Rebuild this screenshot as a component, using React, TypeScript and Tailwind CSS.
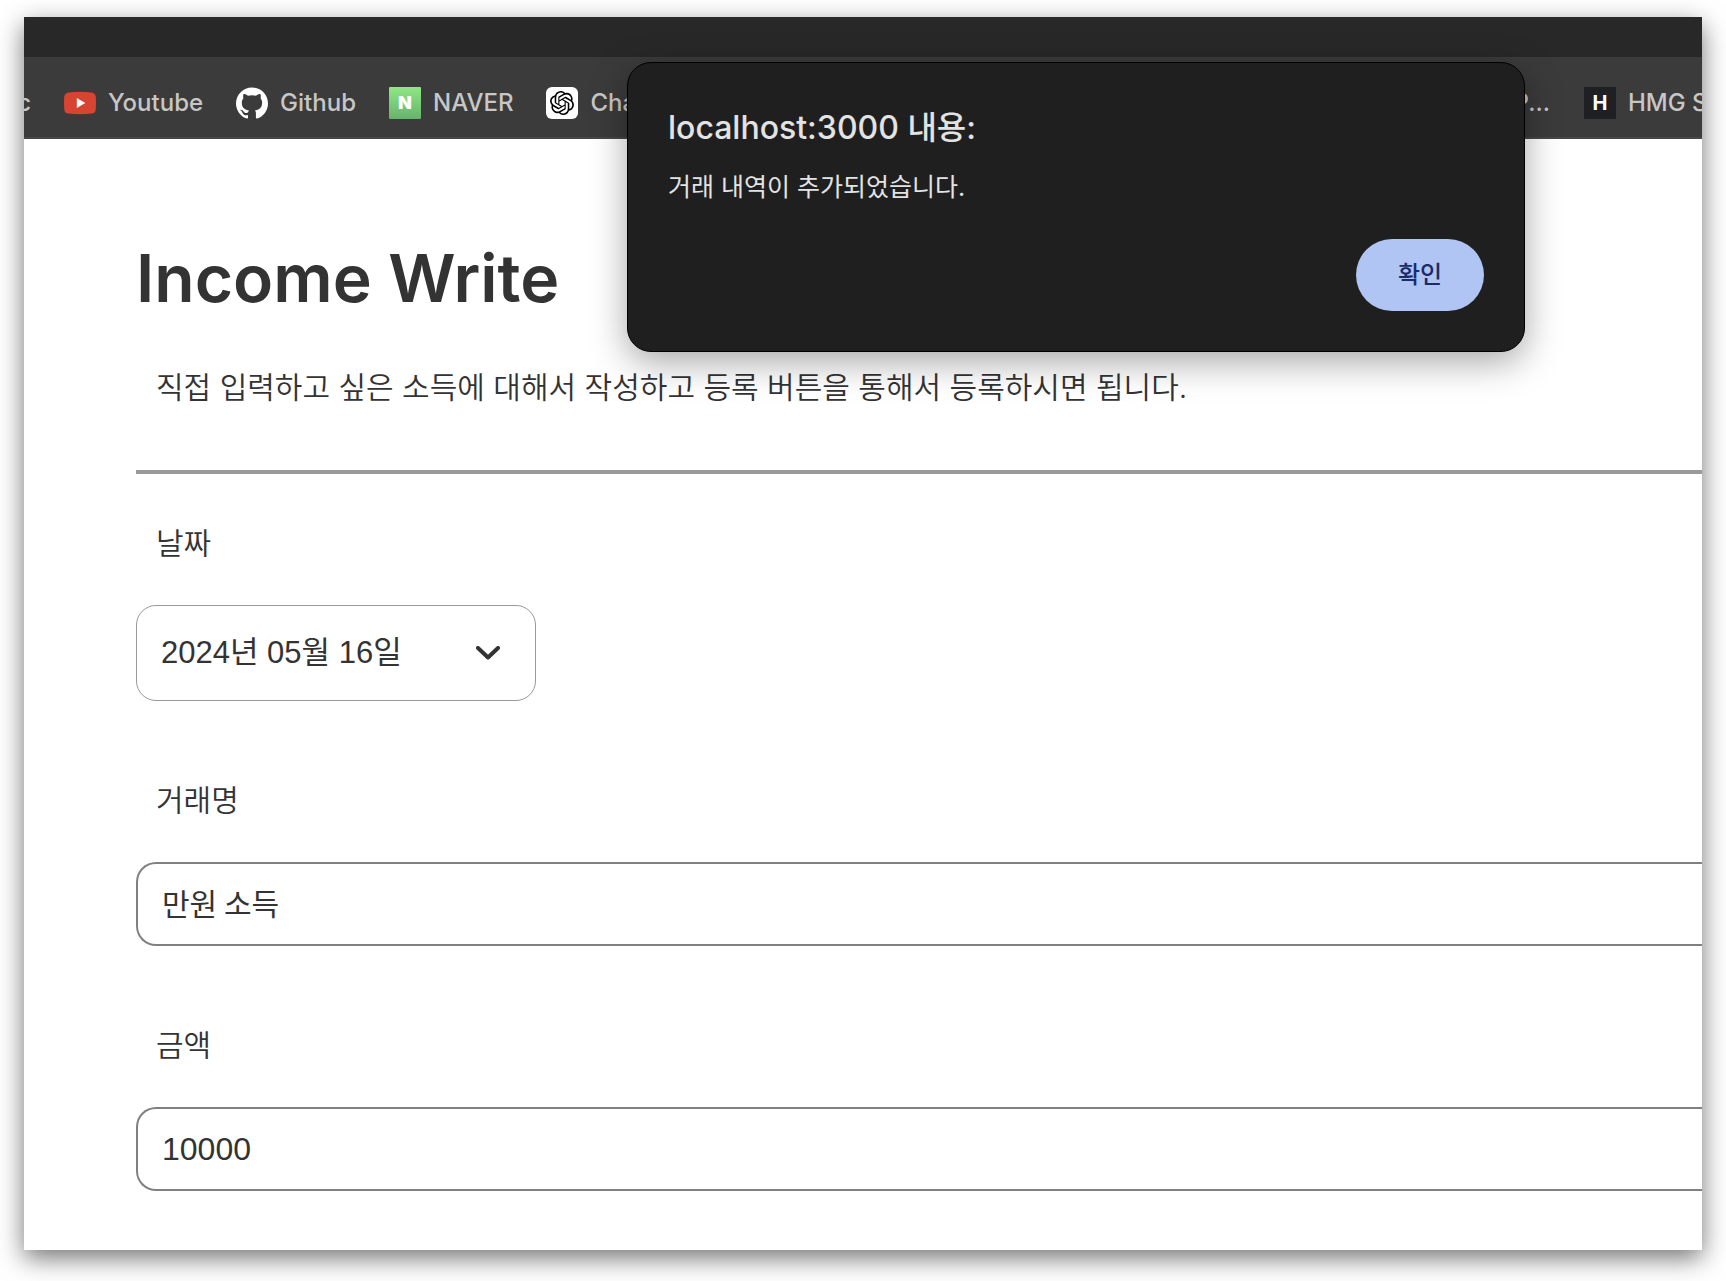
import type { ReactNode } from "react";
import { SiGithub, SiOpenai } from "react-icons/si";

function YoutubeIcon() {
  return (
    <svg viewBox="0 0 32 32" className="size-8" aria-hidden="true">
      <path
        d="M4.5 5.4C8 5 12 4.8 16 4.8s8 .2 11.500.6c2.400.3 3.900 1.800 4.200 4.200.4 4 .4 8.800 0 12.800-.3 2.400-1.800 3.900-4.200 4.200-3.500.4-7.500.6-11.500.6s-8-.2-11.500-.6C2.100 26.300.6 24.800.3 22.400c-.4-4-.4-8.800 0-12.800C.6 7.200 2.100 5.700 4.500 5.400Z"
        fill="#d84432"
      />
      <path d="M12.800 11v10l8.500-5Z" fill="#fff" />
    </svg>
  );
}

function Bookmark({ icon, children }: { icon: ReactNode; children: ReactNode }) {
  return (
    <a href="#" className="flex shrink-0 items-center gap-3">
      <span className="flex size-8 shrink-0 items-center justify-center">{icon}</span>
      {children}
    </a>
  );
}

function BookmarkBar() {
  return (
    <nav className="flex justify-between overflow-hidden whitespace-nowrap border-b-2 border-[#474747] bg-[#3b3b3b] pt-[30px] pb-[18px] text-2xl leading-8 font-medium text-[#c7c7c7]">
      <div className="flex gap-[33px]">
        <a href="#" className="flex w-[7px] justify-end overflow-hidden">
          c
        </a>
        <Bookmark icon={<YoutubeIcon />}>Youtube</Bookmark>
        <Bookmark icon={<SiGithub className="size-8 text-white" />}>Github</Bookmark>
        <Bookmark
          icon={
            <span className="flex size-8 items-center justify-center rounded-[1px] bg-linear-to-b from-[#8fe883] to-[#68b36c] text-lg leading-none font-black text-white">
              N
            </span>
          }
        >
          NAVER
        </Bookmark>
        <Bookmark
          icon={
            <span className="flex size-8 items-center justify-center rounded-md bg-white">
              <SiOpenai className="size-6 text-black" />
            </span>
          }
        >
          ChatGPT
        </Bookmark>
      </div>
      <div className="flex gap-[34px]">
        <a href="#">P...</a>
        <div className="w-[118px] overflow-hidden">
          <Bookmark
            icon={
              <span className="flex size-8 items-center justify-center bg-[#1e2024] text-xl leading-none font-bold text-white">
                H
              </span>
            }
          >
            HMG S
          </Bookmark>
        </div>
      </div>
    </nav>
  );
}

function AlertDialog() {
  return (
    <div
      role="alertdialog"
      aria-labelledby="alert-title"
      aria-describedby="alert-message"
      className="absolute top-[45px] right-[177px] left-[603px] flex flex-col rounded-3xl border border-black bg-[#1f1f1f] p-10 text-[#e3e3e3] shadow-[0_10px_36px_rgba(0,0,0,0.35)]"
    >
      <h2 id="alert-title" className="text-[32px] leading-[50px] font-medium">
        localhost:3000 내용:
      </h2>
      <p id="alert-message" className="mt-4 text-[25px] leading-9">
        거래 내역이 추가되었습니다.
      </p>
      <button
        type="button"
        className="mt-[34px] h-[72px] w-32 self-end rounded-full bg-[#b1c5f4] text-2xl font-medium text-[#1a2b69]"
      >
        확인
      </button>
    </div>
  );
}

function TextField({
  id,
  label,
  value,
  inputMode,
}: {
  id: string;
  label: string;
  value: string;
  inputMode: "text" | "numeric";
}) {
  return (
    <div className="mt-[77px]">
      <label htmlFor={id} className="ml-5 block text-[30px] leading-[44px] font-[350]">
        {label}
      </label>
      <input
        id={id}
        type="text"
        inputMode={inputMode}
        defaultValue={value}
        className={
          "mt-10 block h-[84px] w-full rounded-l-[20px] border-2 border-r-0 border-[#808080] px-6 " +
          (inputMode === "numeric"
            ? "font-['Liberation_Sans',sans-serif] text-[32px]"
            : "pb-1 font-['Noto_Sans_CJK_KR',sans-serif] text-[30px]")
        }
      />
    </div>
  );
}

function IncomeForm() {
  return (
    <main className="pt-[99px] pb-[59px] pl-28 text-[#333]">
      <h1 className="text-[66px] leading-[80px] font-semibold">Income Write</h1>
      <p className="mt-[47px] ml-5 text-[30px] leading-[44px] font-[350]">
        직접 입력하고 싶은 소득에 대해서 작성하고 등록 버튼을 통해서 등록하시면 됩니다.
      </p>
      <hr className="mt-[61px] border-t-4 border-[#999]" />
      <form>
        <label htmlFor="date" className="mt-[47px] ml-5 block text-[30px] leading-[44px] font-[350]">
          날짜
        </label>
        <div className="mt-10 grid w-[400px] items-center">
          <select
            id="date"
            className="col-start-1 row-start-1 h-24 appearance-none rounded-[20px] border border-[#999] bg-white px-6 font-['Liberation_Sans','Noto_Sans_CJK_KR',sans-serif] text-[31px]"
          >
            <option>2024년 05월 16일</option>
          </select>
          <svg
            viewBox="0 0 24 14"
            className="pointer-events-none col-start-1 row-start-1 mr-9 h-[14px] w-6 justify-self-end"
            fill="none"
            stroke="currentColor"
            strokeWidth="4"
            strokeLinecap="round"
            strokeLinejoin="round"
            aria-hidden="true"
          >
            <path d="M2 2l10 9.500L22 2" />
          </svg>
        </div>
        <TextField id="name" label="거래명" value="만원 소득" inputMode="text" />
        <TextField id="amount" label="금액" value="10000" inputMode="numeric" />
      </form>
    </main>
  );
}

export default function App() {
  return (
    <div className="min-h-screen bg-white px-6 pt-[17px] pb-8 font-['Inter','Noto_Sans_CJK_KR',sans-serif]">
      <div className="relative bg-white shadow-[0_8px_24px_rgba(0,0,0,0.55)]">
        <div className="h-10 bg-[#282828]" />
        <BookmarkBar />
        <IncomeForm />
        <AlertDialog />
      </div>
    </div>
  );
}
